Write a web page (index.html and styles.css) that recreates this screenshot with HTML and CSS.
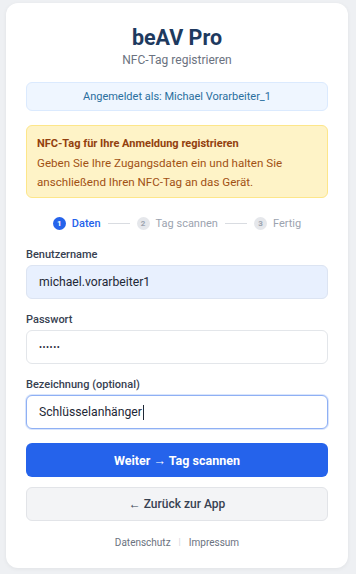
FILE: index.html
```html
<!DOCTYPE html>
<html lang="de">
<head>
<meta charset="utf-8">
<title>beAV Pro – NFC-Tag registrieren</title>
<link rel="stylesheet" href="styles.css">
</head>
<body>
<main class="card">
  <h1 class="title">beAV Pro</h1>
  <p class="subtitle">NFC-Tag registrieren</p>

  <div class="info">Angemeldet als: Michael Vorarbeiter_1</div>

  <div class="notice">
    <div class="notice-title">NFC-Tag für Ihre Anmeldung registrieren</div>
    <div class="notice-text">Geben Sie Ihre Zugangsdaten ein und halten Sie anschließend Ihren NFC-Tag an das Gerät.</div>
  </div>

  <div class="steps">
    <div class="step active"><span class="dot">1</span><span class="step-label">Daten</span></div>
    <span class="line"></span>
    <div class="step"><span class="dot">2</span><span class="step-label">Tag scannen</span></div>
    <span class="line"></span>
    <div class="step"><span class="dot">3</span><span class="step-label">Fertig</span></div>
  </div>

  <form class="form">
    <div class="field">
      <label class="label">Benutzername</label>
      <div class="input autofill">michael.vorarbeiter1</div>
    </div>
    <div class="field">
      <label class="label">Passwort</label>
      <div class="input pw">••••••</div>
    </div>
    <div class="field">
      <label class="label">Bezeichnung (optional)</label>
      <div class="input focus">Schlüsselanhänger<span class="caret"></span></div>
    </div>
    <div class="btn primary">Weiter → Tag scannen</div>
    <div class="btn secondary">← Zurück zur App</div>
  </form>

  <div class="footer">
    <span class="link">Datenschutz</span>
    <span class="sep">|</span>
    <span class="link">Impressum</span>
  </div>
</main>
</body>
</html>
```

FILE: styles.css
```css
* { box-sizing: border-box; }
html, body { margin: 0; padding: 0; }
body {
  background: #eef0f3;
  font-family: Roboto, "Noto Sans", "Liberation Sans", sans-serif;
  padding: 3px 8px 0 6px;
  height: 574px;
  overflow: hidden;
}
.card {
  width: 342px;
  background: #ffffff;
  border-radius: 12px;
  box-shadow: 0 1px 4px rgba(0,0,0,0.06);
  padding: 21px 20px 19px 20px;
  display: flex;
  flex-direction: column;
}
.title {
  margin: 0;
  text-align: center;
  font-size: 21.5px;
  line-height: 27px;
  font-weight: 700;
  color: #1e3a5f;
}
.subtitle {
  margin: 1px 0 0 0;
  text-align: center;
  font-size: 12px;
  line-height: 16px;
  color: #6b7280;
}
.info {
  margin-top: 14px;
  height: 29px;
  display: flex;
  align-items: center;
  justify-content: center;
  background: #eff6ff;
  border: 1px solid #dbeafe;
  border-radius: 6px;
  font-size: 11px;
  color: #2a6f9e;
}
.notice {
  margin-top: 14px;
  height: 73px;
  background: #fef3c7;
  border: 1px solid #fde68a;
  border-radius: 6px;
  padding: 8px 10px;
  font-size: 11.6px;
  line-height: 19px;
  color: #a15114;
}
.notice-title {
  font-size: 11px;
  font-weight: 700;
  color: #92400e;
  margin-bottom: 1px;
}
.steps {
  margin-top: 15px;
  height: 20px;
  display: flex;
  align-items: center;
  justify-content: center;
  gap: 7px;
}
.step {
  display: flex;
  align-items: center;
  gap: 6px;
  font-size: 11px;
  color: #9ca3af;
}
.dot {
  width: 13px;
  height: 13px;
  border-radius: 50%;
  background: #e5e7eb;
  color: #9ca3af;
  font-size: 8px;
  font-weight: 700;
  display: flex;
  align-items: center;
  justify-content: center;
}
.step.active { color: #2563eb; font-weight: 500; }
.step.active .dot { background: #2563eb; color: #ffffff; }
.line {
  width: 22px;
  height: 1px;
  background: #d9dce1;
}
.form {
  margin-top: 15px;
  display: flex;
  flex-direction: column;
  gap: 14px;
}
.field {
  display: flex;
  flex-direction: column;
  gap: 3px;
}
.label {
  font-size: 11px;
  line-height: 14px;
  font-weight: 500;
  color: #374151;
}
.input {
  height: 34px;
  border: 1px solid #e3e6ea;
  border-radius: 6px;
  padding: 0 12px;
  display: flex;
  align-items: center;
  font-size: 12.2px;
  color: #1f2937;
  background: #ffffff;
}
.input.autofill {
  background: #e8f0fe;
  border-color: #dce4f2;
}
.input.pw {
  font-size: 9px;
  letter-spacing: 0.5px;
}
.input.focus {
  border-color: #8fb0f4;
  box-shadow: 0 0 0 1px rgba(147,180,245,0.35);
}
.caret {
  display: inline-block;
  width: 1px;
  height: 15px;
  background: #1f2937;
  margin-left: 1px;
}
.btn {
  height: 34px;
  border-radius: 6px;
  display: flex;
  align-items: center;
  justify-content: center;
  font-size: 12.5px;
}
.btn.primary {
  background: #2563eb;
  color: #ffffff;
  font-weight: 700;
}
.btn.secondary {
  margin-top: -4px;
  height: 34px;
  background: #f3f4f6;
  border: 1px solid #e2e4e8;
  color: #374151;
  font-size: 12px;
  font-weight: 500;
}
.footer {
  margin-top: 14px;
  height: 14px;
  display: flex;
  align-items: center;
  justify-content: center;
  gap: 8px;
  font-size: 10px;
  color: #6b7280;
}
.sep { color: #d1d5db; font-size: 9px; }
```
